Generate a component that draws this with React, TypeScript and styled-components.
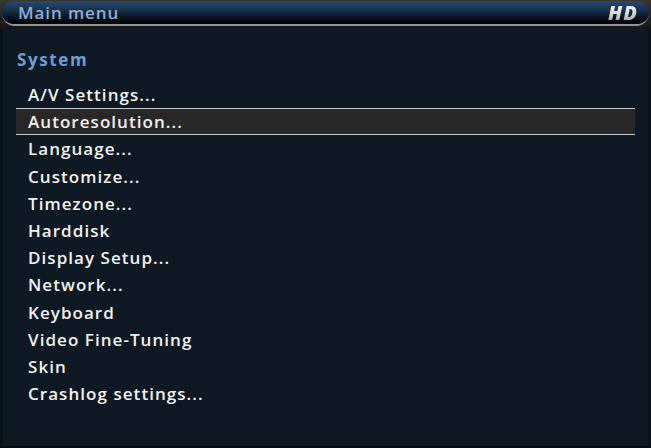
import React from "react";
import styled, { createGlobalStyle } from "styled-components";

const Global = createGlobalStyle`
  html, body { margin: 0; padding: 0; background: #0e1924; }
  #root { width: 651px; height: 448px; overflow: hidden; }
`;

const Screen = styled.div`
  width: 651px;
  height: 448px;
  background: #0e1924;
  border-left: 3px solid #0a1119;
  border-right: 3px solid #0a1119;
  border-bottom: 2px solid #060b10;
  box-sizing: border-box;
  display: flex;
  flex-direction: column;
  font-family: "Open Sans", "Liberation Sans", sans-serif;
`;

const HeaderWrap = styled.div`
  height: 29px;
  background: linear-gradient(180deg, #3a3632 0%, #24221f 60%, #151515 100%);
  padding: 1px 2px 3px 2px;
  box-sizing: border-box;
  margin: 0 -3px;
`;

const Header = styled.div`
  height: 100%;
  border-radius: 13px;
  background: linear-gradient(180deg, #284a6e 0%, #1a3452 35%, #0b1624 70%, #000 100%);
  border-bottom: 2px solid #8f9599;
  box-sizing: border-box;
  display: flex;
  align-items: center;
  justify-content: space-between;
  padding: 0 11px 0 16px;
`;

const Title = styled.div`
  color: #8db0d4;
  font-size: 17px;
  font-weight: 600;
  letter-spacing: 0.9px;
  line-height: 1;
`;

const Badge = styled.div`
  font-size: 20px;
  font-weight: 800;
  font-style: italic;
  letter-spacing: 1px;
  line-height: 1;
  background: linear-gradient(180deg, #ffffff 0%, #d8d8d8 50%, #9a9a9a 100%);
  -webkit-background-clip: text;
  background-clip: text;
  color: transparent;
`;

const Body = styled.div`
  display: flex;
  flex-direction: column;
  padding: 19px 13px 0 13px;
`;

const Section = styled.div`
  color: #6c9ed4;
  font-size: 17px;
  font-weight: 700;
  letter-spacing: 1.6px;
  margin-bottom: 10px;
  padding-left: 1px;
`;

const List = styled.div`
  display: flex;
  flex-direction: column;
`;

const Item = styled.div<{ $active?: boolean }>`
  height: 27.2px;
  display: flex;
  align-items: center;
  padding-left: 12px;
  color: #f2f2f2;
  font-size: 17px;
  font-weight: 600;
  letter-spacing: 1.05px;
  box-sizing: border-box;
  background: ${(p) => (p.$active ? "#282828" : "transparent")};
  border-top: 1px solid ${(p) => (p.$active ? "#c4c7ca" : "transparent")};
  border-bottom: 1px solid ${(p) => (p.$active ? "#c4c7ca" : "transparent")};
`;

const items = [
  "A/V Settings...",
  "Autoresolution...",
  "Language...",
  "Customize...",
  "Timezone...",
  "Harddisk",
  "Display Setup...",
  "Network...",
  "Keyboard",
  "Video Fine-Tuning",
  "Skin",
  "Crashlog settings...",
];

export default function App() {
  return (
    <>
      <Global />
      <Screen>
        <HeaderWrap>
          <Header>
            <Title>Main menu</Title>
            <Badge>HD</Badge>
          </Header>
        </HeaderWrap>
        <Body>
          <Section>System</Section>
          <List>
            {items.map((t, i) => (
              <Item key={t} $active={i === 1}>
                {t}
              </Item>
            ))}
          </List>
        </Body>
      </Screen>
    </>
  );
}
